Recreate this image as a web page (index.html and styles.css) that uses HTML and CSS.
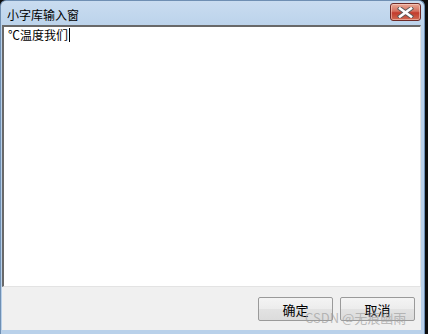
FILE: index.html
```html
<!DOCTYPE html>
<html lang="zh-CN">
<head>
<meta charset="UTF-8">
<title>小字库输入窗</title>
<link rel="stylesheet" href="styles.css">
</head>
<body>

<div class="window">
  <!-- title bar -->
  <div class="titlebar">
    <span class="title">小字库输入窗</span>
    <div class="close-btn">
      <svg width="17" height="11" viewBox="0 0 17 11">
        <path d="M3 1.5 L14 9.5 M14 1.5 L3 9.5" stroke="#5a5a5a" stroke-width="4.4" stroke-linecap="square"/>
        <path d="M3 1.5 L14 9.5 M14 1.5 L3 9.5" stroke="#ffffff" stroke-width="2.6" stroke-linecap="square"/>
      </svg>
    </div>
  </div>

  <!-- edit box -->
  <div class="editbox">
    <span class="entry">℃温度我们</span><span class="caret"></span>
  </div>

  <!-- buttons -->
  <div class="footer">
    <button class="btn">确定</button>
    <button class="btn">取消</button>
  </div>
</div>

<div class="watermark">CSDN @无痕幽雨</div>

</body>
</html>
```

FILE: styles.css
```css
body {
  margin: 0;
  width: 428px;
  height: 334px;
  background-color: #0d0d0d;
  font-family: "Noto Sans CJK SC", "Liberation Sans", sans-serif;
  overflow: hidden;
  position: relative;
}

.window {
  width: 419px;
  height: 334px;
  background: linear-gradient(#c9dcf0, #b9d1ea 30px, #b9d1ea);
  border: 1px solid #6f8fb3;
  border-bottom: none;
  border-radius: 6px 6px 0 0;
  padding: 0 3px 0 1px;
  display: flex;
  flex-direction: column;
}

.titlebar {
  height: 24px;
  display: flex;
  align-items: center;
  justify-content: space-between;
  padding: 0 0 0 5px;
}

.title {
  font-size: 12px;
  color: #000;
  margin-top: 2px;
}

.close-btn {
  width: 29px;
  height: 16px;
  margin-top: -2px;
  border: 1px solid #6e2b28;
  border-radius: 3px;
  background: linear-gradient(#e9a995, #d4705f 45%, #c23b2c 55%, #cf6a52);
  display: flex;
  align-items: center;
  justify-content: center;
  box-shadow: inset 0 0 0 1px rgba(255, 220, 210, 0.5);
}

.editbox {
  height: 257px;
  background: #fff;
  border-top: 2px solid #696969;
  border-left: 2px solid #696969;
  border-right: 1px solid #e3e3e3;
  border-bottom: 1px solid #e3e3e3;
  font-size: 12px;
  line-height: 16px;
  padding: 0 4px 2px;
  display: flex;
  align-items: flex-start;
}

.entry {
  color: #000;
}

.caret {
  width: 1px;
  height: 14px;
  margin-top: 1px;
  margin-left: 1px;
  background: #000;
}

.footer {
  flex: 1;
  background: #f0f0f0;
  display: flex;
  justify-content: flex-end;
  align-items: flex-start;
  gap: 7px;
  padding: 10px 6px 0 0;
  border-bottom: 4px solid #b9d1ea;
  margin-bottom: 1px;
}

.btn {
  width: 75px;
  height: 24px;
  font-family: "Noto Sans CJK SC", sans-serif;
  font-size: 13px;
  color: #000;
  background: linear-gradient(#f4f4f4, #ececec 50%, #e2e2e2 51%, #dcdcdc);
  border: 1px solid #9a9a9a;
  border-radius: 2px;
  padding: 0;
}

.watermark {
  position: absolute;
  left: 305px;
  top: 308px;
  font-size: 13px;
  color: rgba(160, 160, 160, 0.7);
  font-family: "Noto Sans CJK SC", sans-serif;
}
```
